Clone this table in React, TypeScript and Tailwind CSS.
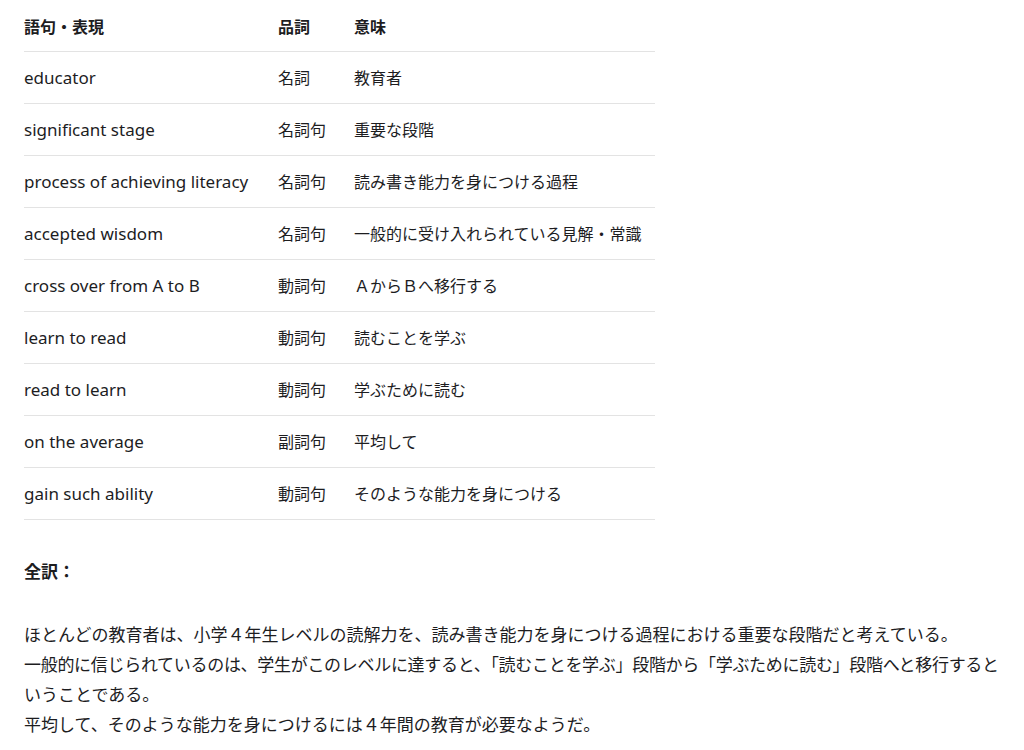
import React from 'react';

type Row = { phrase: string; pos: string; meaning: string };

const ROWS: Row[] = [
  { phrase: 'educator', pos: '名詞', meaning: '教育者' },
  { phrase: 'significant stage', pos: '名詞句', meaning: '重要な段階' },
  { phrase: 'process of achieving literacy', pos: '名詞句', meaning: '読み書き能力を身につける過程' },
  { phrase: 'accepted wisdom', pos: '名詞句', meaning: '一般的に受け入れられている見解・常識' },
  { phrase: 'cross over from A to B', pos: '動詞句', meaning: 'ＡからＢへ移行する' },
  { phrase: 'learn to read', pos: '動詞句', meaning: '読むことを学ぶ' },
  { phrase: 'read to learn', pos: '動詞句', meaning: '学ぶために読む' },
  { phrase: 'on the average', pos: '副詞句', meaning: '平均して' },
  { phrase: 'gain such ability', pos: '動詞句', meaning: 'そのような能力を身につける' },
];

const App: React.FC = () => {
  return (
    <div
      className="min-h-screen bg-white px-6 text-[16px] text-[#1d1d1f]"
      style={{ fontFamily: '"Noto Sans", "Noto Sans CJK JP", sans-serif' }}
    >
      <table className="w-[631px] border-collapse">
        <thead>
          <tr className="h-[51px] border-b border-[#e3e3e3]">
            <th className="w-[254px] pt-[3px] text-left font-bold">語句・表現</th>
            <th className="w-[76px] pt-[3px] text-left font-bold">品詞</th>
            <th className="pt-[3px] text-left font-bold">意味</th>
          </tr>
        </thead>
        <tbody>
          {ROWS.map((r) => (
            <tr key={r.phrase} className="h-[52px] border-b border-[#e3e3e3]">
              <td className="pt-[1px] text-left text-[17px]">{r.phrase}</td>
              <td className="pt-[1px] text-left">{r.pos}</td>
              <td className="pt-[1px] text-left">{r.meaning}</td>
            </tr>
          ))}
        </tbody>
      </table>

      <p className="mt-[37px] text-[17px] font-bold leading-[30px]">全訳：</p>

      <div className="mt-[33px] text-[17px] leading-[30px]">
        <p className="whitespace-nowrap">
          ほとんどの教育者は、小学４年生レベルの読解力を、読み書き能力を身につける過程における重要な段階だと考えている。
        </p>
        <p className="whitespace-nowrap tracking-[-0.3px]">
          一般的に信じられているのは、学生がこのレベルに達すると、「読むことを学ぶ」段階から「学ぶために読む」段階へと移行すると
        </p>
        <p className="whitespace-nowrap">いうことである。</p>
        <p className="whitespace-nowrap">
          平均して、そのような能力を身につけるには４年間の教育が必要なようだ。
        </p>
      </div>
    </div>
  );
};

export default App;
